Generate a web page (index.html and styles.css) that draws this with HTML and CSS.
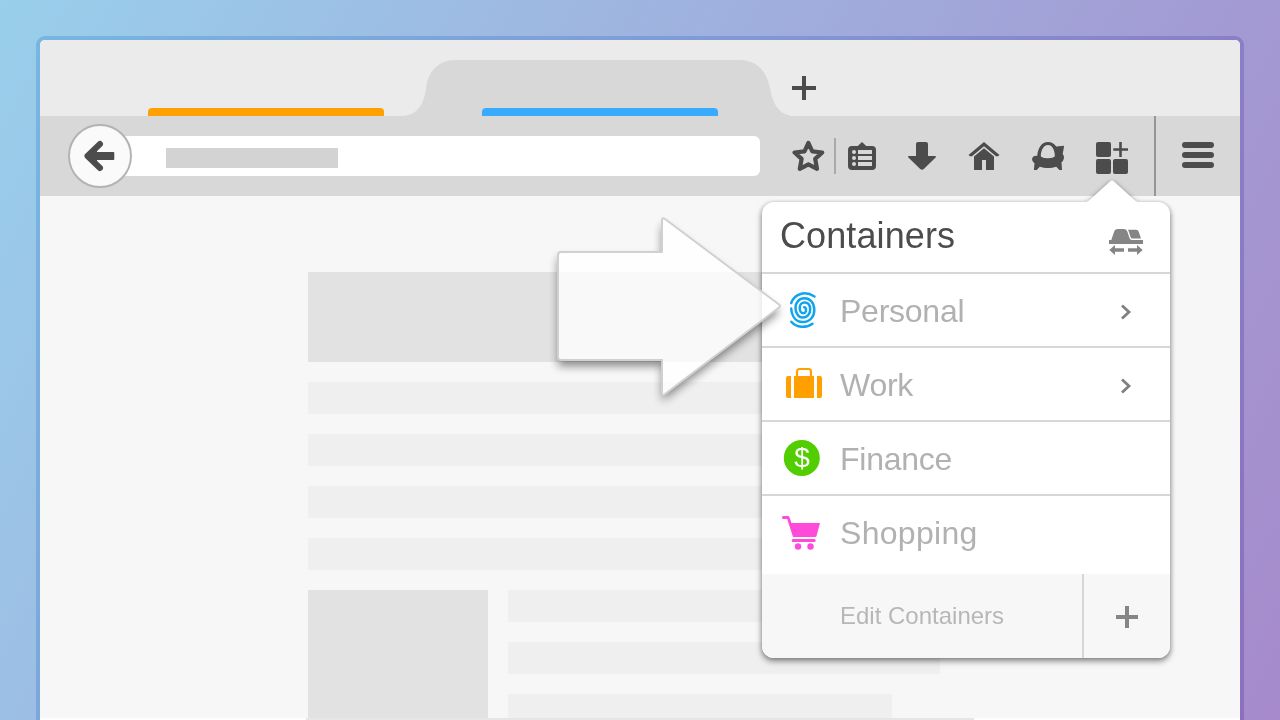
FILE: index.html
```html
<!DOCTYPE html>
<html lang="en">
<head>
<meta charset="utf-8">
<title>Containers</title>
<link rel="stylesheet" href="styles.css">
</head>
<body>
<main class="stage">
  <div class="window-edge">
  <div class="window">
    <div class="tabstrip">
      <div class="tab-line orange"></div>
      <div class="tab-active">
        <svg class="tab-shape" width="390" height="56" viewBox="0 0 390 56"><path fill="#d8d8d8" d="M0 56H3C16 55 24 46 26 28C28 12 38 0 55 0H340C357 0 367 12 370 28C373 46 380 55 393 56Z"/></svg>
        <div class="tab-line blue"></div>
      </div>
      <svg class="new-tab" width="24" height="24" viewBox="0 0 24 24"><path fill="#4c4c4c" d="M10 0h4v10h10v4H14v10h-4V14H0v-4h10z"/></svg>
    </div>

    <div class="toolbar">
      <div class="back"><svg width="32" height="32" viewBox="0 0 32 32"><g fill="none" stroke="#4c4c4c" stroke-linecap="round" stroke-linejoin="round"><path stroke-width="6" d="M16 4L3.500 16L16 28"/><path stroke-width="2" d="M5 13H29.300V19H5Z" fill="#4c4c4c"/><path stroke="none" fill="#4c4c4c" d="M4 16L13 8V24Z"/></g></svg></div>
      <div class="urlbar"><div class="url"></div></div>
      <div class="icons">
        <svg class="star" width="34" height="34" viewBox="0 0 34 34"><path fill="none" stroke="#4c4c4c" stroke-width="4.200" stroke-linejoin="round" d="M16.400 4L20.300 12.300L30.200 13.500L23.200 19.900L25 29.800L16.400 25.300L7.800 29.800L9.600 19.900L2.600 13.500L12.500 12.300Z"/></svg>
        <div class="small-divider"></div>
        <svg class="clip" width="28" height="28" viewBox="0 0 28 28"><path fill="#4c4c4c" d="M14 0l4.200 4H24a4 4 0 0 1 4 4v16a4 4 0 0 1-4 4H4a4 4 0 0 1-4-4V8a4 4 0 0 1 4-4h5.800z"/><g fill="#d8d8d8"><circle cx="6" cy="10" r="2"/><circle cx="6" cy="16" r="2"/><circle cx="6" cy="22" r="2"/><path d="M10 8h14v4H10zM10 14h14v4H10zM10 20h14v4H10z"/></g></svg>
        <svg class="down" width="28" height="28" viewBox="0 0 28 28"><path fill="#4c4c4c" d="M10 0h8a2 2 0 0 1 2 2v12h7.200q1.200.4.400 1.600L15.800 27q-1.800 1.600-3.600 0L.4 15.600Q-.4 14.400.8 14H8V2a2 2 0 0 1 2-2z"/></svg>
        <svg class="home" width="32" height="28" viewBox="0 0 32 28"><path fill="#4c4c4c" d="M16 0L31.500 13l-1.500 1.200H28L16 4.300L4 14.200H2L.5 13z"/><path fill="#4c4c4c" d="M16 6.200l10 8.300V28h-8V18h-4v10H6V14.500z"/></svg>
        <svg class="couch" width="32" height="28" viewBox="0 0 32 28"><path fill="#4c4c4c" fill-rule="evenodd" d="M5.200 14C6 6 9.500 0 16 0c3.500 0 6.500 1.800 8.200 4.500L32 3.800C31.800 7 31.200 9 30.700 12C32 13.500 32.200 15.500 31.700 17C31.200 18.800 30.200 19.800 29.500 20.300L30 28H27.300L24.300 24.700c-5 1.700-11.500 1.700-16.500 0L4.800 28H1.900l.6-6.700C.6 19.500-.3 18 .2 16.300C.9 14.300 3.300 13.500 5.200 14zM16 3C11 3 9 9 8.800 14C9.500 17 22 17 22.900 14C22.700 9 21 3 16 3z"/></svg>
        <svg class="grid" width="32" height="32" viewBox="0 0 32 32"><g fill="#4c4c4c"><rect width="15" height="15" rx="2"/><rect y="17" width="15" height="15" rx="2"/><rect x="17" y="17" width="15" height="15" rx="2"/><path d="M23.200 0h2.600v6.300H32v2.400h-6.200V15h-2.600V8.700H17.300V6.300h5.900z"/></g></svg>
      </div>
      <div class="menu"><svg width="32" height="26" viewBox="0 0 32 26"><g fill="#4c4c4c"><rect width="32" height="6" rx="3"/><rect y="10" width="32" height="6" rx="3"/><rect y="20" width="32" height="6" rx="3"/></g></svg></div>
    </div>

    <div class="page">
      <div class="hero"></div>
      <div class="line"></div><div class="line"></div><div class="line"></div><div class="line"></div>
      <div class="media">
        <div class="thumb"></div>
        <div class="media-lines"><div class="line"></div><div class="line"></div><div class="line short"></div></div>
      </div>
    </div>
    <div class="page-end"><div class="page-end-mark"></div></div>
  </div>
  </div>

  <section class="popup">
    <svg class="popup-tip" width="52" height="23" viewBox="0 0 52 23"><path fill="#fff" d="M0 22L3 20.500L24 1.500Q26 -.5 28 1.500L49 20.500L52 22V23H0Z"/></svg>
    <header class="popup-head">
      <h1>Containers</h1>
      <svg width="34" height="27" viewBox="0 0 34 27"><g fill="#858585"><path d="M0 11h2.300L5 3Q5.800 0 9 0H15Q17.600 0 18.300 2.600L20.500 9Q21 11 23 11H34V15H0z"/><path d="M18.800.8H27.200Q29 .8 29.700 2.800L32 9.600H23.500Q22 9.600 21.500 8L20 3.200Q19.600 1.600 18.800.8z"/><path d="M.3 21L6 16v3.200h9v3.600H6V26zM33.700 21L28 16v3.200h-9v3.600h9V26z"/></g></svg>
    </header>
    <div class="row">
      <svg class="row-icon" width="40" height="40" viewBox="0 0 40 40"><g fill="none" stroke="#0fa5ee" stroke-width="2.500" stroke-linecap="round"><path d="M9.200 13C12.500 3.500 23 .500 32.500 6.500"/><path d="M9.200 18.500C9.800 26.500 14 31.800 20.500 32C28.500 32 32.500 26 32.300 19.500C32 12.500 28 8.300 22.500 8.300C17 8.300 13.400 12.500 13.500 18C13.500 23.500 16.500 27.500 20.800 27.500C25.500 27.500 28.300 23.500 28.200 19C28 15 25.800 12.600 22.600 12.600C19.500 12.600 17.700 15 17.700 18C17.700 21 19.200 23.200 21.300 23.200C23.200 23.200 24.200 21.600 24 19.600C23.900 18 23.200 17.200 22.200 17.200"/><path d="M9.300 31.800C14.500 38 24 38.300 30.500 33.700"/></g></svg>
      <span>Personal</span>
      <svg class="chevron" width="12" height="16" viewBox="0 0 12 16"><path fill="none" stroke="#808080" stroke-width="2.800" d="M2 1.500L9 8L2 14.500"/></svg>
    </div>
    <div class="row">
      <svg class="row-icon up" width="40" height="40" viewBox="0 0 40 40"><g fill="#ff9f00"><path d="M6 13h3v22H6a2 2 0 0 1-2-2V15a2 2 0 0 1 2-2zM12 13h20v22H12zM35 13h3a2 2 0 0 1 2 2v18a2 2 0 0 1-2 2h-3z"/></g><path fill="none" stroke="#ff9f00" stroke-width="2.200" d="M15 14V8.500a2.500 2.500 0 0 1 2.500-2.500h9a2.500 2.500 0 0 1 2.500 2.500V14"/></svg>
      <span>Work</span>
      <svg class="chevron" width="12" height="16" viewBox="0 0 12 16"><path fill="none" stroke="#808080" stroke-width="2.800" d="M2 1.500L9 8L2 14.500"/></svg>
    </div>
    <div class="row">
      <svg class="row-icon" width="40" height="40" viewBox="0 0 40 40"><circle cx="19.800" cy="20" r="18" fill="#51cd00"/><text class="dollar" x="20" y="29.300" text-anchor="middle">$</text></svg>
      <span>Finance</span>
    </div>
    <div class="row last">
      <svg class="row-icon" width="40" height="40" viewBox="0 0 40 40"><g fill="#ff4bda"><path d="M1.300 4H6q1 0 1.400 1l2.100 5.900H38L34.500 24Q34.200 25 33.200 25H11L5.200 7H1.300Q0 7 0 5.500T1.300 4z"/><rect x="9.700" y="27" width="24" height="3" rx="1.500"/><circle cx="16" cy="34.500" r="3.200"/><circle cx="28.500" cy="34.500" r="3.200"/></g></svg>
      <span class="loose">Shopping</span>
    </div>
    <footer class="popup-foot">
      <div class="edit">Edit Containers</div>
      <div class="add"><svg width="22" height="22" viewBox="0 0 22 22"><path fill="#868686" d="M9 0h4v9h9v4h-9v9H9v-9H0V9h9z"/></svg></div>
    </footer>
  </section>

  <svg class="pointer" width="270" height="220" viewBox="540 200 270 220">
    <defs><filter id="shade" x="-20%" y="-20%" width="140%" height="140%"><feGaussianBlur in="SourceAlpha" stdDeviation="5"/><feOffset dy="6" result="b"/><feComposite in="b" in2="SourceAlpha" operator="out"/></filter></defs>
    <path filter="url(#shade)" opacity=".45" d="M558 252H662V218L780 306L662 395V360H558Z"/>
    <path fill="#fff" fill-opacity=".8" stroke="#d0d0d0" stroke-width="2" stroke-linejoin="round" d="M561 252H662V220Q662 217 665 219L779 304.500Q781 306 779 307.500L665 394Q662 396 662 393V360H561Q558 360 558 357V255Q558 252 561 252Z"/>
  </svg>
</main>
</body>
</html>
```
FILE: styles.css
```css
* { box-sizing: border-box; }
body { margin: 0; font-family: "Liberation Sans", Arial, sans-serif; }
svg { display: block; flex: none; }

.stage {
  position: relative;
  width: 1280px;
  height: 720px;
  overflow: hidden;
  padding: 36px 36px 0;
  background: linear-gradient(118deg, #99cfeb 0%, #9fb2df 42%, #a39ad3 75%, #a68acb 100%);
}
.window-edge {
  height: 684px;
  padding: 4px 4px 0;
  border-radius: 9px 9px 0 0;
  background: linear-gradient(118deg, #77b6e2 0%, #7f9bd5 42%, #8a80c8 75%, #8c70be 100%);
}
.window {
  height: 680px;
  border-radius: 5px 5px 0 0;
  overflow: hidden;
  background: #f7f7f7;
  display: flex;
  flex-direction: column;
}

.tabstrip {
  height: 76px;
  background: #ebebeb;
  display: flex;
  align-items: flex-end;
  padding-left: 108px;
}
.tab-line { width: 236px; height: 8px; border-radius: 4px 4px 0 0; }
.orange { background: #ffa000; }
.blue { background: #38abff; }
.tab-active {
  width: 390px;
  height: 56px;
  margin-left: 16px;
  display: grid;
  align-items: end;
}
.tab-shape, .tab-active .blue { grid-area: 1 / 1; }
.tab-active .blue { margin-left: 82px; }
.new-tab { margin: 0 0 16px 2px; }

.toolbar {
  height: 80px;
  background: #d8d8d8;
  display: flex;
  align-items: center;
  padding-left: 28px;
}
.back {
  width: 64px;
  height: 64px;
  border: 2px solid #b3b3b3;
  border-radius: 50%;
  background: #fafafa;
  display: flex;
  align-items: center;
  justify-content: center;
  z-index: 1;
}
.urlbar {
  width: 650px;
  height: 40px;
  margin-left: -22px;
  padding: 12px 0 0 56px;
  border-radius: 0 6px 6px 0;
  background: #fff;
}
.url { width: 172px; height: 20px; background: #d3d3d3; }
.icons { width: 394px; height: 80px; display: flex; align-items: flex-start; }
.star { margin: 23px 0 0 32px; }
.small-divider { width: 2px; height: 36px; margin: 22px 12px 0 8px; background: #a9a9a9; }
.clip, .down, .home, .couch, .grid { margin-top: 26px; }
.down, .home, .couch, .grid { margin-left: 32px; }
.menu {
  width: 86px;
  height: 80px;
  border-left: 2px solid #969696;
  padding: 26px 0 0 26px;
}

.page { height: 522px; padding: 76px 300px 0 268px; overflow: hidden; }
.hero { height: 90px; margin-bottom: 20px; background: #e2e2e2; }
.line { height: 32px; margin-bottom: 20px; background: #efefef; }
.media { display: flex; gap: 20px; }
.thumb { width: 180px; height: 140px; background: #e2e2e2; }
.media-lines { width: 432px; }
.short { width: 384px; }
.page-end { height: 2px; background: #fff; padding-left: 266px; }
.page-end-mark { width: 668px; height: 2px; background: #e6e6e6; }

.popup {
  position: absolute;
  left: 762px;
  top: 202px;
  width: 408px;
  height: 456px;
  border-radius: 12px;
  background: #fff;
  filter: drop-shadow(0 3px 3px rgba(0, 0, 0, .35)) drop-shadow(0 1px 2px rgba(0, 0, 0, .25));
}
.popup-tip { position: absolute; left: 324px; top: -22px; }
.popup-head {
  height: 72px;
  border-bottom: 2px solid #d7d7d7;
  padding: 0 27px 0 18px;
  display: flex;
  align-items: flex-start;
  justify-content: space-between;
}
.popup-head h1 { margin: 13px 0 0; font-size: 36px; line-height: 42px; font-weight: 400; letter-spacing: .1px; color: #4c4c4c; }
.popup-head svg { margin-top: 27px; }
.row {
  height: 74px;
  border-bottom: 2px solid #d7d7d7;
  padding: 0 38px 0 20px;
  display: flex;
  align-items: center;
  font-size: 32px;
  line-height: 36px;
  letter-spacing: -.25px;
  color: #b1b1b1;
}
.row .loose { letter-spacing: .3px; }
.row span { margin-left: 18px; padding-top: 2px; }
.row-icon { overflow: visible; }
.up { margin-top: -2px; }
.chevron { margin: 4px 0 0 auto; }
.last { height: 78px; border-bottom: 0; padding-bottom: 6px; }
.dollar { font-size: 28px; letter-spacing: 0; fill: #fff; }
.popup-foot {
  height: 84px;
  display: flex;
  background: #f7f7f7;
  border-radius: 0 0 12px 12px;
}
.edit {
  width: 320px;
  padding-left: 78px;
  font-size: 24px;
  line-height: 84px;
  color: #b7b7b7;
}
.add {
  width: 88px;
  border-left: 2px solid #d7d7d7;
  display: flex;
  align-items: center;
  justify-content: center;
  padding-top: 2px;
}
.pointer { position: absolute; left: 540px; top: 200px; }
```
